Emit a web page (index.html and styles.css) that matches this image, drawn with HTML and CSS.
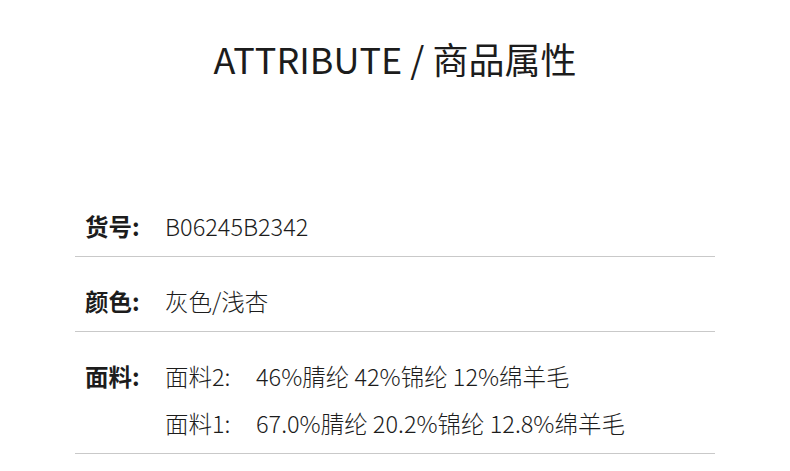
FILE: index.html
```html
<!DOCTYPE html>
<html lang="zh">
<head>
<meta charset="utf-8">
<link rel="stylesheet" href="styles.css">
</head>
<body>
<div class="page">
  <h1 class="title">ATTRIBUTE / 商品属性</h1>
  <div class="table">
    <div class="row">
      <div class="label">货号:</div>
      <div class="value"><div class="line">B06245B2342</div></div>
    </div>
    <div class="row">
      <div class="label">颜色:</div>
      <div class="value"><div class="line">灰色/浅杏</div></div>
    </div>
    <div class="row">
      <div class="label">面料:</div>
      <div class="value">
        <div class="line"><span class="sub">面料2:</span><span>46%腈纶 42%锦纶 12%绵羊毛</span></div>
        <div class="line"><span class="sub">面料1:</span><span>67.0%腈纶 20.2%锦纶 12.8%绵羊毛</span></div>
      </div>
    </div>
  </div>
</div>
</body>
</html>
```

FILE: styles.css
```css
html, body {
  margin: 0;
  padding: 0;
  background: #ffffff;
}
.page {
  width: 790px;
  height: 471px;
  overflow: hidden;
  font-family: "Noto Sans CJK SC", "Noto Sans", sans-serif;
  color: #1c1c1c;
}
.title {
  margin: 0;
  padding-top: 33px;
  height: 182px;
  box-sizing: border-box;
  line-height: 50px;
  font-size: 36px;
  font-weight: 400;
  text-align: center;
  letter-spacing: 0;
}
.table {
  margin-left: 75px;
  width: 640px;
}
.row {
  display: flex;
  padding: 29px 10px 15px;
  border-bottom: 1px solid #c9c9c9;
}
.label {
  width: 80px;
  flex: none;
  font-size: 23.5px;
  font-weight: 700;
  line-height: 30px;
}
.value {
  display: flex;
  flex-direction: column;
  gap: 17px;
  font-size: 23.5px;
  font-weight: 300;
  line-height: 30px;
}
.line {
  display: flex;
  white-space: nowrap;
}
.sub {
  width: 91px;
  flex: none;
}
```
